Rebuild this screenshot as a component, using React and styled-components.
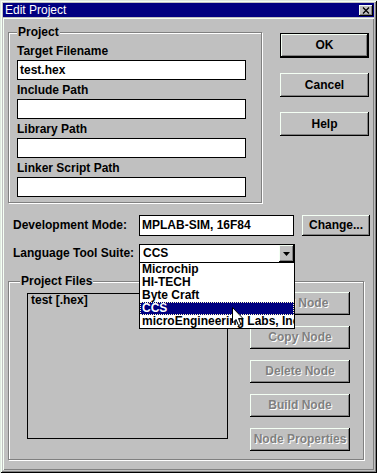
import React from "react";
import styled, { createGlobalStyle } from "styled-components";

const Global = createGlobalStyle`
  html, body { margin: 0; padding: 0; background: #c0c0c0; }
  * { box-sizing: border-box; }
  body { font-family: "Liberation Sans", Arial, sans-serif; }
`;

const HL = "#f4fff4";
const FONT = `bold 12px/13px "Liberation Sans", Arial, sans-serif`;

const Window = styled.div`
  width: 377px;
  height: 473px;
  padding: 3px;
  background: #c0c0c0;
  display: flex;
  flex-direction: column;
  box-shadow: inset 1px 1px 0 #dfe8df, inset -1px -1px 0 #000,
    inset 2px 2px 0 ${HL}, inset -2px -2px 0 #808080;
`;

const TitleBar = styled.div`
  height: 14px;
  background: #000080;
  color: #fff;
  font: 12px/14px "Liberation Sans", Arial, sans-serif;
  padding-left: 2px;
  display: flex;
  align-items: center;
  justify-content: space-between;
`;

const CloseBtn = styled.div`
  width: 14px;
  height: 11px;
  margin-right: 1px;
  background: #c0c0c0;
  box-shadow: inset -1px -1px 0 #000, inset 1px 1px 0 ${HL},
    inset -2px -2px 0 #808080;
  display: flex;
  align-items: center;
  justify-content: center;
`;

const Body = styled.div`
  flex: 1;
  margin-top: 1px;
  padding: 14px 0 0 5px;
  box-shadow: inset 1px 1px 0 ${HL}, inset -1px -1px 0 #808080;
  font: ${FONT};
  color: #000;
  display: flex;
  flex-direction: column;
`;

const TopRow = styled.div`
  display: flex;
  align-items: flex-start;
`;

const Group = styled.div`
  position: relative;
  width: ${(p) => p.$w}px;
  height: ${(p) => p.$h}px;
  border: 1px solid #808080;
  box-shadow: 1px 1px 0 #fff, inset 1px 1px 0 #fff;
  padding: ${(p) => p.$pad};
`;

const Legend = styled.span`
  position: absolute;
  top: -7px;
  left: ${(p) => p.$left}px;
  padding: 0 1px;
  background: #c0c0c0;
  font: ${FONT};
`;

const Fields = styled.div`
  display: flex;
  flex-direction: column;
  gap: 4px;
`;

const Field = styled.div`
  display: flex;
  flex-direction: column;
  gap: 2px;
`;

const Label = styled.div`
  height: 13px;
  white-space: nowrap;
`;

const TextBox = styled.div`
  width: ${(p) => p.$w}px;
  height: ${(p) => p.$h}px;
  background: #fff;
  border: 1px solid #000;
  padding: 0 2px;
  display: flex;
  align-items: center;
  white-space: nowrap;
  overflow: hidden;
`;

const ButtonCol = styled.div`
  display: flex;
  flex-direction: column;
  gap: ${(p) => p.$gap}px;
  margin-left: ${(p) => p.$ml}px;
  margin-top: ${(p) => p.$mt}px;
`;

const Button = styled.div`
  width: ${(p) => p.$w}px;
  height: ${(p) => p.$h}px;
  margin-left: ${(p) => p.$ml || 0}px;
  background: #c0c0c0;
  display: flex;
  align-items: center;
  justify-content: center;
  white-space: nowrap;
  font: ${FONT};
  color: ${(p) => (p.$disabled ? "#808080" : "#000")};
  text-shadow: ${(p) => (p.$disabled ? "1px 1px 0 #fff" : "none")};
  border: ${(p) => (p.$default ? "1px solid #000" : "none")};
  box-shadow: inset -1px -1px 0 #000, inset 1px 1px 0 ${HL},
    inset -2px -2px 0 #808080;
`;

const Row = styled.div`
  display: flex;
  align-items: center;
  margin-top: ${(p) => p.$mt}px;
`;

const RowLabel = styled.div`
  width: 126px;
  margin-left: 5px;
  white-space: nowrap;
`;

const Combo = styled.div`
  position: relative;
  width: 156px;
  height: 19px;
  background: #fff;
  border: 1px solid #000;
  display: flex;
  align-items: center;
  justify-content: space-between;
  padding-left: 3px;
`;

const ArrowBtn = styled.div`
  width: 15px;
  height: 17px;
  background: #c0c0c0;
  box-shadow: inset -1px -1px 0 #000, inset 1px 1px 0 ${HL},
    inset -2px -2px 0 #808080;
  display: flex;
  align-items: center;
  justify-content: center;
`;

const DropList = styled.div`
  position: absolute;
  z-index: 5;
  left: -1px;
  top: 17px;
  width: 156px;
  background: #fff;
  border: 1px solid #000;
  display: flex;
  flex-direction: column;
`;

const Item = styled.div`
  height: 13px;
  line-height: 13px;
  padding-left: 2px;
  white-space: nowrap;
  overflow: hidden;
  background: ${(p) => (p.$sel ? "#000080" : "#fff")};
  color: ${(p) => (p.$sel ? "#fff" : "#000")};
  outline: ${(p) => (p.$sel ? "1px dotted #ffffc0" : "none")};
  outline-offset: -1px;
`;

const Cursor = styled.svg`
  position: absolute;
  left: 92px;
  top: 44px;
`;

const FilesRow = styled.div`
  display: flex;
  align-items: flex-start;
`;

const ListBox = styled.div`
  width: 201px;
  height: 146px;
  border: 1px solid #000;
  background: #c0c0c0;
  padding: 0 3px;
`;

const projectFields = ["Target Filename", "Include Path", "Library Path", "Linker Script Path"];
const langItems = ["Microchip", "HI-TECH", "Byte Craft", "CCS", "microEngineering Labs, Inc"];
const nodeButtons = ["Add Node", "Copy Node", "Delete Node", "Build Node", "Node Properties"];

export default function App() {
  return (
    <>
      <Global />
      <Window>
        <TitleBar>
          <span>Edit Project</span>
          <CloseBtn>
            <svg width="8" height="7" viewBox="0 0 8 7">
              <path d="M1 0.5 L7 6.5 M7 0.5 L1 6.5" stroke="#000" strokeWidth="1.3" />
            </svg>
          </CloseBtn>
        </TitleBar>
        <Body>
          <TopRow>
            <Group $w={254} $h={171} $pad="12px 0 0 8px">
              <Legend $left={8}>Project</Legend>
              <Fields>
                {projectFields.map((f, i) => (
                  <Field key={f}>
                    <Label>{f}</Label>
                    <TextBox $w={229} $h={20}>{i === 0 ? "test.hex" : ""}</TextBox>
                  </Field>
                ))}
              </Fields>
            </Group>
            <ButtonCol $gap={15} $ml={18} $mt={1}>
              <Button $w={89} $h={25} $default>OK</Button>
              <Button $w={89} $h={24}>Cancel</Button>
              <Button $w={89} $h={24}>Help</Button>
            </ButtonCol>
          </TopRow>

          <Row $mt={12}>
            <RowLabel>Development Mode:</RowLabel>
            <TextBox $w={155} $h={21}>MPLAB-SIM, 16F84</TextBox>
            <Button $w={68} $h={21} $ml={8}>Change...</Button>
          </Row>

          <Row $mt={8}>
            <RowLabel>Language Tool Suite:</RowLabel>
            <Combo>
              <span>CCS</span>
              <ArrowBtn>
                <svg width="7" height="4" viewBox="0 0 7 4">
                  <path d="M0 0 H7 L3.5 4 Z" fill="#000" />
                </svg>
              </ArrowBtn>
              <DropList>
                {langItems.map((t) => (
                  <Item key={t} $sel={t === "CCS"}>{t}</Item>
                ))}
                <Cursor width="12" height="20" viewBox="0 0 12 20">
                  <path
                    d="M0.5 0.5 L0.5 16 L4 12.5 L6.5 18.5 L9 17.5 L6.5 11.5 L11 11.5 Z"
                    fill="#fff"
                    stroke="#000"
                    strokeWidth="1"
                  />
                </Cursor>
              </DropList>
            </Combo>
          </Row>

          <Row $mt={18}>
            <Group $w={356} $h={179} $pad="11px 0 0 18px">
              <Legend $left={11}>Project Files</Legend>
              <FilesRow>
                <ListBox>test [.hex]</ListBox>
                <ButtonCol $gap={11} $ml={22} $mt={-1}>
                  {nodeButtons.map((b) => (
                    <Button key={b} $w={100} $h={23} $disabled>{b}</Button>
                  ))}
                </ButtonCol>
              </FilesRow>
            </Group>
          </Row>
        </Body>
      </Window>
    </>
  );
}
